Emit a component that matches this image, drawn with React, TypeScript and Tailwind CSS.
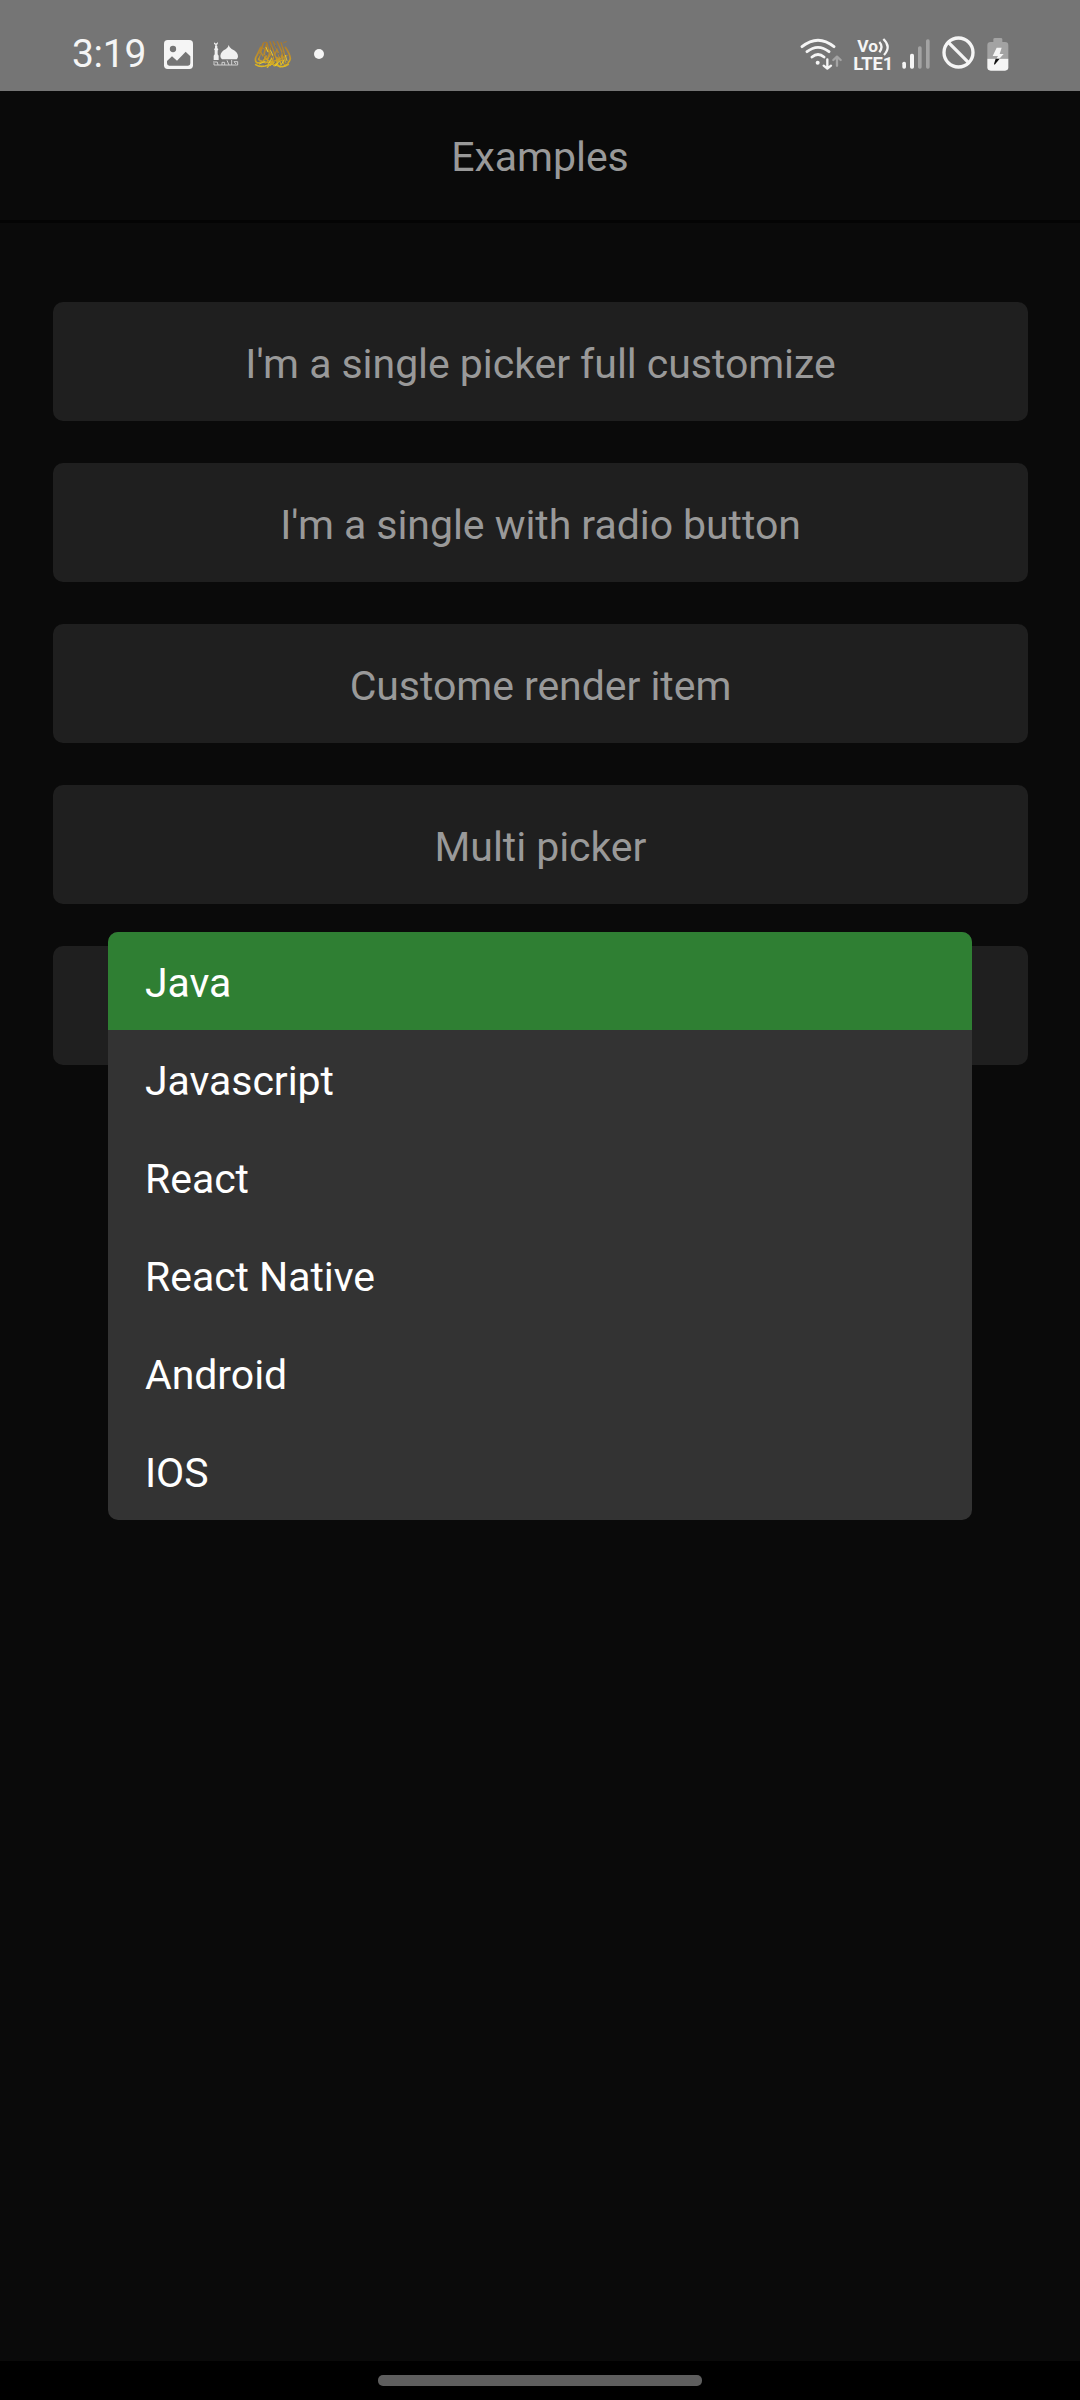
const buttons = [
  "I'm a single picker full customize",
  "I'm a single with radio button",
  'Custome render item',
  'Multi picker',
  '',
];

const languages = ['Java', 'Javascript', 'React', 'React Native', 'Android', 'IOS'];

function ImageIcon() {
  return (
    <svg className="h-[29px] w-[29px]" viewBox="342 120 87 87">
      <rect x="342" y="120" width="87" height="87" rx="11" fill="#f5f5f5" />
      <circle cx="369" cy="147" r="9.5" fill="#757575" />
      <path d="M351 183l15-14 15 13 26-27 14 14v21q0 7-7 7h-56q-7 0-7-7z" fill="#757575" />
    </svg>
  );
}

function MosqueIcon() {
  return (
    <svg className="h-[26px] w-[26px]" viewBox="488 121 78 78">
      <g fill="#f0f0f0">
        <path d="M491 123q1 7 8 5l4-4-1 7-4 2 3 3v6l3 4-2 4v11l3 4v13h-15v-13l3-4v-12l-2-3 3-4v-6l2-3-5-3z" />
        <path d="M535 133q2 8 9 12 19 9 19 22 0 6-4 9h-44q-5-4-5-10 1-14 17-21 7-4 8-12z" />
      </g>
      <g fill="none" stroke="#d0d0d0" strokeWidth="3">
        <path d="M491 181v12h12l-2-9h-7M503 193h59v-10h-11l6 7M515 193v-8h8v8M530 179l6 14M544 178v15" />
      </g>
    </svg>
  );
}

function CalligraphyIcon() {
  return (
    <svg className="h-[29px] w-[38px]" viewBox="610 121 114 87">
      <defs>
        <linearGradient id="gold" gradientUnits="userSpaceOnUse" x1="0" y1="124" x2="0" y2="206">
          <stop offset="0" stopColor="#a8782c" />
          <stop offset=".55" stopColor="#c0902a" />
          <stop offset="1" stopColor="#e3bf20" />
        </linearGradient>
      </defs>
      <g fill="none" stroke="url(#gold)" strokeLinecap="round" strokeLinejoin="round">
        <path
          strokeWidth="5"
          d="M630 143q-8 18-15 31-3 14 7 16l15-4 10-17M638 131l-8 25-6 22M648 133l-7 27q-2 17 9 19l8-14M704 143q14 20 15 34-2 12-17 18M615 195q12 8 28 4l22-6 20 6q15 5 28-5"
        />
        <path
          strokeWidth="4"
          d="M648 128l10 37 12 33M658 126l14 37 10 33M668 126l15 33 7 34M680 126l14 32 4 34M691 129l9 28 4 30M662 139l-13 48M679 149l-20 48M697 161l-23 37M630 158l12 17 19 12M647 150l21 18 26 15M624 180l21 10 30-7 34-16M650 203l15-17 23 16"
        />
        <path strokeWidth="3" d="M640 128h5M699 129l8-3M632 143l9 5" />
      </g>
      <g fill="none" stroke="#f1d52c" strokeWidth="2.5" strokeLinecap="round">
        <path d="M626 193l18-8M653 194l9-17M673 199l13-14M691 196l9-15M660 153l7 15M646 143l6 14M704 167l5 16" />
      </g>
      <g fill="none" stroke="#757063" strokeWidth="3">
        <path d="M621 176l8-15M637 178l4-12M655 180l7-13M674 179l-5-13M690 174l-7-14M669 194l7-6M640 196l10-5M711 189l-9 5M647 166l5-8M664 152l-4-12M678 146l-4-10M700 170l-4-12" />
      </g>
    </svg>
  );
}

function WifiIcon() {
  return (
    <svg className="h-[34px] w-[43px]" viewBox="60 109 129 102" fill="none" strokeLinecap="round">
      <g stroke="#f5f5f5" strokeWidth="8.5">
        <path d="M66 138q48-39 96 0M81 153q33-26 66 0M96 169q18-15 36 0" />
        <path d="M142 176v27M131 195l11 9 11-9" strokeWidth="7" strokeLinejoin="round" />
      </g>
      <circle cx="113" cy="186" r="6" fill="#f5f5f5" />
      <path d="M171 195v-26M160 178l11-10 11 10" stroke="#a4a4a4" strokeWidth="7" strokeLinejoin="round" />
    </svg>
  );
}

function VolteIcon() {
  return (
    <svg className="h-[44px] w-[44px]" viewBox="214 94 132 132">
      <g fill="#f5f5f5" fontFamily="Roboto" fontWeight="700">
        <text x="233" y="153" fontSize="51" textLength="62" lengthAdjust="spacingAndGlyphs">Vo</text>
        <text x="221" y="207" fontSize="55" textLength="120" lengthAdjust="spacingAndGlyphs">LTE1</text>
      </g>
      <g fill="none" stroke="#f5f5f5" strokeWidth="7">
        <path d="M299 124q13 14 0 31M311 115q25 23 2 48" />
      </g>
    </svg>
  );
}

function SignalIcon() {
  return (
    <svg className="h-[30px] w-[28px]" viewBox="366 116 84 90">
      <rect x="367" y="184" width="11" height="21" rx="5" fill="#f5f5f5" />
      <rect x="390" y="160" width="12" height="45" rx="5" fill="#f5f5f5" />
      <rect x="414" y="138" width="11" height="67" rx="5" fill="#a3a3a3" />
      <rect x="438" y="117" width="11" height="88" rx="5" fill="#a3a3a3" />
    </svg>
  );
}

function BlockedIcon() {
  return (
    <svg className="h-[33px] w-[33px]" viewBox="484.500 107.500 99 99" fill="none" stroke="#f5f5f5" strokeWidth="10">
      <circle cx="534" cy="157" r="43.500" />
      <path d="M503 126l62 62" />
    </svg>
  );
}

function BatteryIcon() {
  return (
    <svg className="h-[34px] w-[22px]" viewBox="620 109 66 102">
      <path d="M621 174v-40q0-10 10-10h8v-8q0-4 5-4h17q5 0 5 4v8h8q10 0 10 10v40z" fill="#a3a3a3" />
      <path d="M621 174h63v26q0 10-10 10h-43q-10 0-10-10z" fill="#f5f5f5" />
      <path d="M649 141h15l-6 19h12l-13 14h-9l5-8h-16z" fill="#f5f5f5" />
      <path d="M646 174h12l-15 18-2-2z" fill="#111" />
    </svg>
  );
}

function StatusBar() {
  return (
    <div className="flex h-[91px] items-center justify-between bg-[#757575] pt-[17px] pr-[71px] pl-[72px]">
      <div className="flex items-center">
        <span className="w-[92px] text-[39px] leading-none tracking-[-0.3px] text-[#f5f5f5]">3:19</span>
        <ImageIcon />
        <div className="ml-5">
          <MosqueIcon />
        </div>
        <div className="ml-[15px]">
          <CalligraphyIcon />
        </div>
        <div className="ml-[22px] size-[10px] rounded-full bg-[#f5f5f5]" />
      </div>
      <div className="flex items-center">
        <WifiIcon />
        <div className="mr-[7px] ml-2">
          <VolteIcon />
        </div>
        <SignalIcon />
        <div className="mr-3 ml-3 -mt-[3px]">
          <BlockedIcon />
        </div>
        <BatteryIcon />
      </div>
    </div>
  );
}

export default function App() {
  return (
    <div className="relative flex h-[2400px] w-[1080px] flex-col overflow-hidden bg-[#0a0a0a] font-['Roboto',sans-serif] text-[41px] leading-[50px] tracking-[-0.05px]">
      <StatusBar />
      <header className="flex h-[132px] items-center justify-center border-b-[3px] border-[#040404] pt-[2px] text-[#999]">
        Examples
      </header>
      <main className="flex flex-1 flex-col gap-[42px] pt-[79px] pr-[52px] pl-[53px]">
        {buttons.map((label, i) => (
          <button
            key={i}
            className="flex h-[119px] shrink-0 items-center justify-center rounded-[10px] bg-[#1f1f1f] pt-[5px] text-[#999]"
          >
            {label}
          </button>
        ))}
      </main>
      <footer className="flex h-[39px] items-start justify-center bg-black pt-[14px]">
        <div className="h-[11px] w-[324px] rounded-[5px] bg-[#5e5e5e]" />
      </footer>

      <ul className="absolute top-[932px] left-[108px] w-[864px] overflow-hidden rounded-[10px] bg-[#333] text-white">
        {languages.map((name, i) => (
          <li
            key={name}
            className={`flex h-[98px] items-center pt-1 pl-[37px] ${i === 0 ? 'bg-[#2f7f33]' : ''}`}
          >
            {name}
          </li>
        ))}
      </ul>
    </div>
  );
}
